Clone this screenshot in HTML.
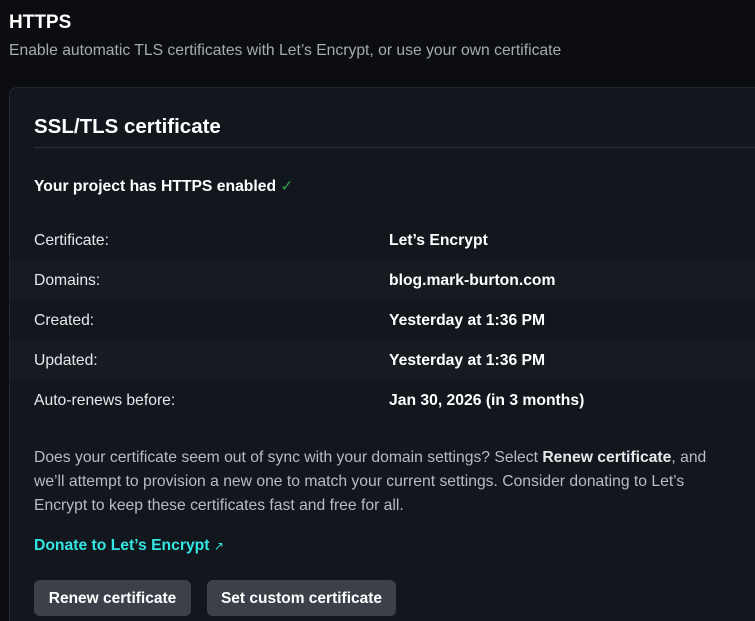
<!DOCTYPE html>
<html><head><style>
html,body{margin:0;width:755px;height:621px;overflow:hidden}
body{background:#0b0d10;font-family:"Liberation Sans",sans-serif;color:#e6e8ea;position:relative}
.a{position:absolute;white-space:nowrap}
.card{position:absolute;left:9px;top:87px;width:800px;height:534px;background:#12161d;border:1px solid #242830;border-bottom:none;border-radius:8px 8px 0 0}
.row{position:absolute;left:10px;width:760px;height:40px;font-size:15.7px}
.row.alt{background:#161b22}
.row span{position:absolute;top:12px}
.row .k{left:24px;color:#e6e8ea}
.row .v{left:379px;font-weight:bold;color:#fff}
.btn{position:absolute;top:580px;height:36px;background:#3b4049;border-radius:6px;font-weight:bold;font-size:15.5px;color:#fff;line-height:38px;text-align:center}
</style></head><body>
<div class="a" style="left:9px;top:12px;font-size:19px;font-weight:bold;color:#fff">HTTPS</div>
<div class="a" style="left:9px;top:42px;font-size:15.7px;color:#a7abb1">Enable automatic TLS certificates with Let’s Encrypt, or use your own certificate</div>
<div class="card"></div>
<div class="a" style="left:34px;top:115px;font-size:20.5px;font-weight:bold;color:#fff">SSL/TLS certificate</div>
<div class="a" style="left:34px;top:147px;width:730px;height:1px;background:#2c313a"></div>
<div class="a" style="left:34px;top:176px;font-size:15.7px;font-weight:bold;color:#fff">Your project has HTTPS enabled <span style="color:#2e9e4f;font-weight:normal">✓</span></div>
<div class="row" style="top:220px"><span class="k">Certificate:</span><span class="v">Let’s Encrypt</span></div>
<div class="row alt" style="top:260px"><span class="k">Domains:</span><span class="v">blog.mark-burton.com</span></div>
<div class="row" style="top:300px"><span class="k">Created:</span><span class="v">Yesterday at 1:36 PM</span></div>
<div class="row alt" style="top:340px"><span class="k">Updated:</span><span class="v">Yesterday at 1:36 PM</span></div>
<div class="row" style="top:380px"><span class="k">Auto-renews before:</span><span class="v">Jan 30, 2026 (in 3 months)</span></div>
<div class="a" style="left:34px;top:446px;width:680px;white-space:normal;font-size:15.7px;line-height:24px;color:#b9bdc3">Does your certificate seem out of sync with your domain settings? Select <b style="color:#e6e8ea">Renew certificate</b>, and we’ll attempt to provision a new one to match your current settings. Consider donating to Let’s Encrypt to keep these certificates fast and free for all.</div>
<div class="a" style="left:34px;top:537px;font-size:15.7px;font-weight:bold;color:#32e6e2">Donate to Let’s Encrypt <span style="font-size:12px;font-weight:normal">↗</span></div>
<div class="btn" style="left:34px;width:157px">Renew certificate</div>
<div class="btn" style="left:207px;width:189px">Set custom certificate</div>
</body></html>
